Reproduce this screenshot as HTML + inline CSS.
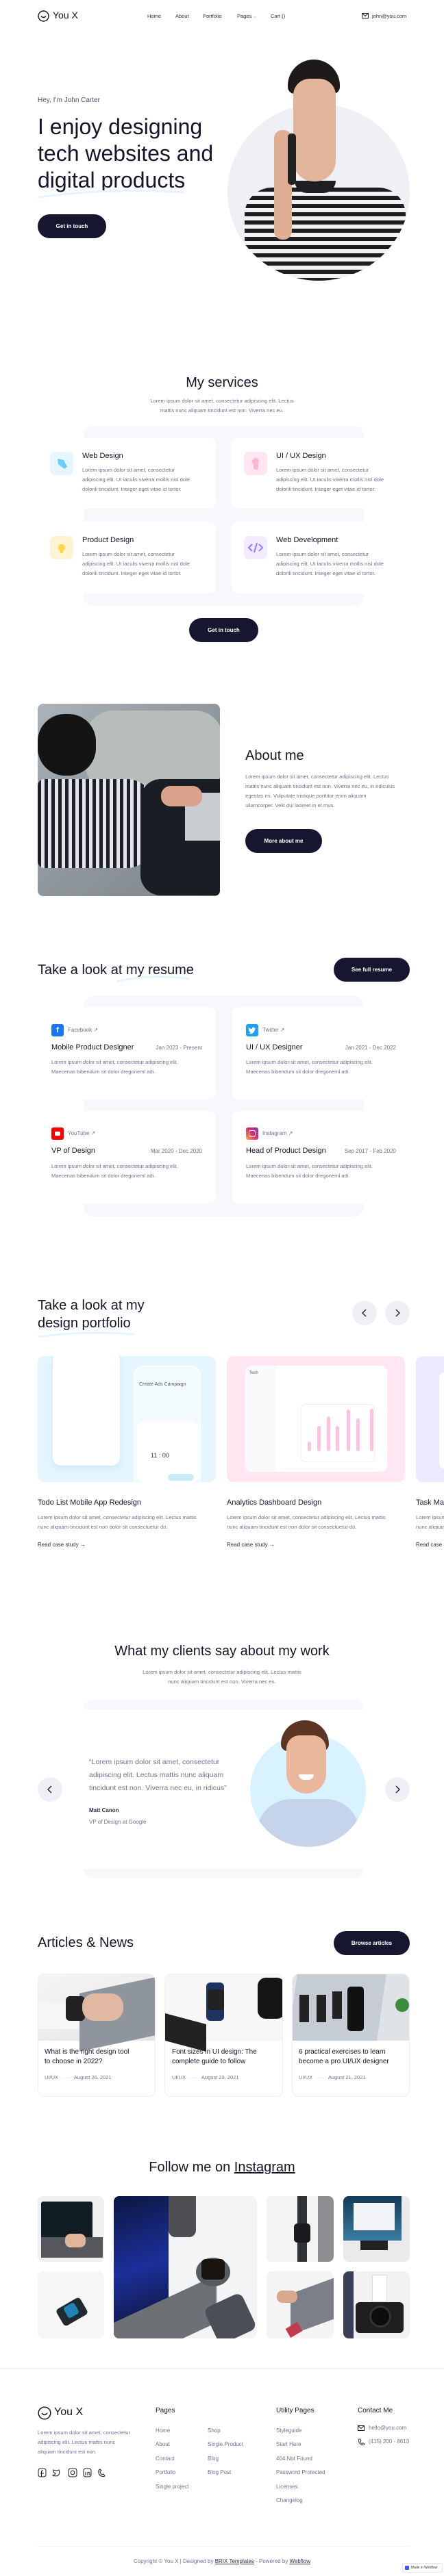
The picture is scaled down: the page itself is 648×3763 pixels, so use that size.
<!DOCTYPE html>
<html><head><meta charset="utf-8">
<style>
*{margin:0;padding:0;box-sizing:border-box}
html,body{width:648px;height:3763px;overflow:hidden;background:#fff}
body{position:relative;font-family:"Liberation Sans",sans-serif;color:#14142b}
.a{position:absolute}
.t{position:absolute;white-space:nowrap}
.g{color:#6e7191}
.btn{position:absolute;background:#161630;color:#fff;border-radius:20px;font-size:8px;font-weight:bold;display:flex;align-items:center;justify-content:center}
.h2{font-size:20px;font-weight:500}
.p{font-size:7.6px;line-height:14px;color:#6e7191}
.panel{position:absolute;background:#f7f7fc;border-radius:14px}
.card{position:absolute;background:#fff;border-radius:10px}
.circ{position:absolute;border-radius:50%;background:#eff0f6;display:flex;align-items:center;justify-content:center}
.nav{font-size:7.5px;color:#2e2e48}
.ico{position:absolute;width:34px;height:34px;border-radius:7px}
.lg{position:absolute;width:18px;height:18px;border-radius:3px;color:#fff;font-size:11px;font-weight:bold;display:flex;align-items:center;justify-content:center}
.img{position:absolute;overflow:hidden;border-radius:8px}
</style></head><body>

<!-- NAV -->
<svg class="a" style="left:55px;top:15px" width="17" height="17" viewBox="0 0 17 17"><circle cx="8.5" cy="8.5" r="7.5" fill="none" stroke="#14142b" stroke-width="1.4"/><path d="M5 8.5 Q8.5 12.5 12 8.5" fill="none" stroke="#14142b" stroke-width="1.4"/></svg>
<div class="t" style="left:77px;top:14px;font-size:14px">You X</div>
<div class="t nav" style="left:215px;top:19px">Home</div>
<div class="t nav" style="left:256px;top:19px">About</div>
<div class="t nav" style="left:296px;top:19px">Portfolio</div>
<div class="t nav" style="left:346px;top:19px">Pages <span style="color:#aaa">⌄</span></div>
<div class="t nav" style="left:395px;top:19px">Cart ()</div>
<svg class="a" style="left:528px;top:19px" width="10" height="8" viewBox="0 0 10 8"><rect x=".5" y=".5" width="9" height="7" fill="none" stroke="#14142b"/><path d="M.5 .5 L5 4.5 L9.5 .5" fill="none" stroke="#14142b"/></svg>
<div class="t nav" style="left:543px;top:19px">john@you.com</div>

<!-- HERO -->
<div class="t g" style="left:55px;top:141px;font-size:10px;color:#4e4b66">Hey, I’m John Carter</div>
<div class="a" style="left:55px;top:166px;font-size:32px;line-height:39px;font-weight:500;white-space:nowrap">I enjoy designing<br>tech websites and<br>digital products</div>
<svg class="a" style="left:55px;top:276px" width="220" height="14"><path d="M1 12 Q100 -2 214 5" fill="none" stroke="#e5f4ff" stroke-width="3"/></svg>
<div class="btn" style="left:55px;top:313px;width:100px;height:35px">Get in touch</div>
<div class="a" style="left:332px;top:152px;width:266px;height:258px;border-radius:50%;background:#eff0f6;overflow:hidden">
  <div class="a" style="left:25px;top:122px;width:235px;height:160px;border-radius:40px 40px 0 0;background:repeating-linear-gradient(180deg,#1d1d22 0 6px,#f2f2f2 6px 12px)"></div>
  <div class="a" style="left:98px;top:112px;width:60px;height:18px;border-radius:0 0 30px 30px;background:#1d1d22"></div>
</div>
<div class="a" style="left:420px;top:87px;width:76px;height:50px;border-radius:38px 38px 10px 10px;background:#1e1a1a"></div>
<div class="a" style="left:428px;top:115px;width:62px;height:150px;border-radius:24px 24px 30px 30px;background:#e2b49a"></div>
<div class="a" style="left:400px;top:190px;width:26px;height:160px;border-radius:12px;background:#dfae93"></div>
<div class="a" style="left:420px;top:195px;width:12px;height:75px;border-radius:5px;background:#222"></div>

<!-- SERVICES -->
<div class="t h2" style="left:0;width:648px;text-align:center;top:548px">My services</div>
<div class="a p" style="left:0;width:648px;text-align:center;top:579px">Lorem ipsum dolor sit amet, consectetur adipiscing elit. Lectus<br>mattis nunc aliquam tincidunt est non. Viverra nec eu.</div>
<div class="panel" style="left:122px;top:622px;width:409px;height:263px"></div>
<div class="card" style="left:40px;top:640px;width:275px;height:103px"></div>
<div class="card" style="left:338px;top:640px;width:270px;height:103px"></div>
<div class="card" style="left:40px;top:762px;width:275px;height:105px"></div>
<div class="card" style="left:338px;top:762px;width:270px;height:105px"></div>
<div class="ico" style="left:73px;top:660px;background:#e5f6ff"><svg width="34" height="34"><path d="M11 10 L20 12 L25 22 L21 25 L12 18 Z" fill="#6ccdfa"/></svg></div>
<div class="ico" style="left:356px;top:660px;background:#ffe6f1"><svg width="34" height="34"><circle cx="17" cy="14" r="5" fill="#ffb6d5"/><rect x="14" y="14" width="7" height="12" rx="3" fill="#ffb6d5"/></svg></div>
<div class="ico" style="left:73px;top:783px;background:#fff3d4"><svg width="34" height="34"><circle cx="17" cy="17" r="5" fill="#ffd63e"/><rect x="15" y="21" width="4" height="4" fill="#ffd63e"/></svg></div>
<div class="ico" style="left:356px;top:783px;background:#f1edff"><svg width="34" height="34"><path d="M12 12 L7 17 L12 22 M22 12 L27 17 L22 22 M19 10 L15 24" fill="none" stroke="#a17cff" stroke-width="2.2"/></svg></div>
<div class="t" style="left:120px;top:660px;font-size:11px">Web Design</div>
<div class="t" style="left:403px;top:660px;font-size:11px">UI / UX Design</div>
<div class="t" style="left:120px;top:783px;font-size:11px">Product Design</div>
<div class="t" style="left:403px;top:783px;font-size:11px">Web Development</div>
<div class="a p" style="left:120px;top:680px;white-space:nowrap">Lorem ipsum dolor sit amet, consectetur<br>adipiscing elit. Ut iaculis viverra mollis nisl dole<br>dolorili tincidunt. Integer eget vitae id tortor.</div>
<div class="a p" style="left:403px;top:680px;white-space:nowrap">Lorem ipsum dolor sit amet, consectetur<br>adipiscing elit. Ut iaculis viverra mollis nisl dole<br>dolorili tincidunt. Integer eget vitae id tortor.</div>
<div class="a p" style="left:120px;top:803px;white-space:nowrap">Lorem ipsum dolor sit amet, consectetur<br>adipiscing elit. Ut iaculis viverra mollis nisl dole<br>dolorili tincidunt. Integer eget vitae id tortor.</div>
<div class="a p" style="left:403px;top:803px;white-space:nowrap">Lorem ipsum dolor sit amet, consectetur<br>adipiscing elit. Ut iaculis viverra mollis nisl dole<br>dolorili tincidunt. Integer eget vitae id tortor.</div>
<div class="btn" style="left:276px;top:903px;width:101px;height:35px">Get in touch</div>

<!-- ABOUT -->
<div class="img" style="left:55px;top:1028px;width:266px;height:281px;background:linear-gradient(135deg,#aab2ba,#8f989e 50%,#7d8589)">
  <div class="a" style="left:70px;top:10px;width:200px;height:120px;border-radius:40px;background:#b7bdb8"></div>
  <div class="a" style="left:0;top:110px;width:170px;height:130px;background:repeating-linear-gradient(90deg,#1c1f2a 0 5px,#e5e5ea 5px 10px);border-radius:10px 40px 40px 10px"></div>
  <div class="a" style="left:0;top:15px;width:85px;height:90px;border-radius:40px;background:#141414"></div>
  <div class="a" style="left:150px;top:110px;width:116px;height:170px;background:#1a1d23;border-radius:30px 0 0 30px"></div>
  <div class="a" style="left:215px;top:130px;width:51px;height:70px;background:#c9ccd0"></div>
  <div class="a" style="left:180px;top:120px;width:60px;height:30px;border-radius:14px;background:#d9a38b"></div>
</div>
<div class="t h2" style="left:358px;top:1093px">About me</div>
<div class="a p" style="left:358px;top:1128px;white-space:nowrap">Lorem ipsum dolor sit amet, consectetur adipiscing elit. Lectus<br>mattis nunc aliquam tincidunt est non. Viverra nec eu, in ridiculus<br>egestas mi. Vulputate tristique porttitor enim aliquam<br>ullamcorper. Velit dui laoreet in et mus.</div>
<div class="btn" style="left:358px;top:1211px;width:112px;height:35px">More about me</div>

<!-- RESUME -->
<div class="t h2" style="left:55px;top:1406px">Take a look at my resume</div>
<svg class="a" style="left:168px;top:1424px" width="112" height="12"><path d="M2 10 Q50 -2 108 6" fill="none" stroke="#e5f4ff" stroke-width="3"/></svg>
<div class="btn" style="left:487px;top:1399px;width:111px;height:35px">See full resume</div>
<div class="panel" style="left:122px;top:1455px;width:409px;height:322px"></div>
<div class="card" style="left:40px;top:1471px;width:275px;height:135px"></div>
<div class="card" style="left:339px;top:1471px;width:269px;height:135px"></div>
<div class="card" style="left:40px;top:1623px;width:275px;height:135px"></div>
<div class="card" style="left:339px;top:1623px;width:269px;height:135px"></div>
<div class="lg" style="left:75px;top:1496px;background:#1877f2">f</div>
<div class="lg" style="left:359px;top:1496px;background:#1da1f2"><svg width="12" height="10" viewBox="0 0 12 10"><path d="M11 1.5 Q10 2 9.5 2 Q9 .5 7.5 .5 Q5.5 .8 5.8 3.2 Q3 3 1 1 Q.2 3.5 2 4.8 Q1.5 4.8 1 4.6 Q1.3 6.5 3 7 Q2.3 7.2 1.8 7 Q2.5 8.5 4.5 8.6 Q2.8 9.8 .5 9.5 Q6 12 9.5 6 Q10.3 4.5 10.3 2.6 Q11 2 11 1.5Z" fill="#fff"/></svg></div>
<div class="lg" style="left:75px;top:1647px;background:#ff0000"><div style="width:8px;height:6px;background:#fff;border-radius:1px"></div></div>
<div class="lg" style="left:359px;top:1647px;background:linear-gradient(45deg,#fcaf45,#e1306c,#833ab4)"><div style="width:10px;height:10px;border:1.5px solid #fff;border-radius:3px"></div></div>
<div class="t g" style="left:99px;top:1500px;font-size:8px">Facebook ↗</div>
<div class="t g" style="left:383px;top:1500px;font-size:8px">Twitter ↗</div>
<div class="t g" style="left:99px;top:1651px;font-size:8px">YouTube ↗</div>
<div class="t g" style="left:383px;top:1651px;font-size:8px">Instagram ↗</div>
<div class="t" style="left:75px;top:1524px;font-size:11px">Mobile Product Designer</div>
<div class="t g" style="left:224px;top:1526px;font-size:8px;width:71px;text-align:right">Jan 2023 - Present</div>
<div class="t" style="left:359px;top:1524px;font-size:11px">UI / UX Designer</div>
<div class="t g" style="left:490px;top:1526px;font-size:8px;width:88px;text-align:right">Jan 2021 - Dec 2022</div>
<div class="t" style="left:75px;top:1675px;font-size:11px">VP of Design</div>
<div class="t g" style="left:200px;top:1677px;font-size:8px;width:95px;text-align:right">Mar 2020 - Dec 2020</div>
<div class="t" style="left:359px;top:1675px;font-size:11px">Head of Product Design</div>
<div class="t g" style="left:480px;top:1677px;font-size:8px;width:98px;text-align:right">Sep 2017 - Feb 2020</div>
<div class="a p" style="left:75px;top:1545px;white-space:nowrap">Lorem ipsum dolor sit amet, consectetur adipiscing elit.<br>Maecenas bibendum sit dolor dregoneml adi.</div>
<div class="a p" style="left:359px;top:1545px;white-space:nowrap">Lorem ipsum dolor sit amet, consectetur adipiscing elit.<br>Maecenas bibendum sit dolor dregoneml adi.</div>
<div class="a p" style="left:75px;top:1697px;white-space:nowrap">Lorem ipsum dolor sit amet, consectetur adipiscing elit.<br>Maecenas bibendum sit dolor dregoneml adi.</div>
<div class="a p" style="left:359px;top:1697px;white-space:nowrap">Lorem ipsum dolor sit amet, consectetur adipiscing elit.<br>Maecenas bibendum sit dolor dregoneml adi.</div>

<!-- PORTFOLIO -->
<div class="a h2" style="left:55px;top:1894px;line-height:26px;white-space:nowrap">Take a look at my<br>design portfolio</div>
<svg class="a" style="left:55px;top:1943px" width="142" height="12"><path d="M1 10 Q70 0 140 6" fill="none" stroke="#e5f4ff" stroke-width="3"/></svg>
<div class="circ" style="left:514px;top:1900px;width:36px;height:36px"><svg width="10" height="12"><path d="M7 1 L2 6 L7 11" fill="none" stroke="#14142b" stroke-width="1.3"/></svg></div>
<div class="circ" style="left:562px;top:1900px;width:36px;height:36px"><svg width="10" height="12"><path d="M3 1 L8 6 L3 11" fill="none" stroke="#14142b" stroke-width="1.3"/></svg></div>
<div class="img" style="left:55px;top:1981px;width:260px;height:184px;background:#e5f6ff;border-radius:10px">
  <div class="a" style="left:22px;top:-5px;width:98px;height:165px;background:#fff;border-radius:12px;box-shadow:0 4px 10px rgba(150,200,230,.3)"></div>
  <div class="a" style="left:140px;top:14px;width:98px;height:180px;background:#f4fbff;border-radius:14px;border:1px solid #fff"></div>
  <div class="a" style="left:145px;top:95px;width:90px;height:90px;background:#fff;border-radius:12px"></div>
  <div class="t" style="left:148px;top:38px;font-size:7px;color:#555">Create Ads Campaign</div>
  <div class="t" style="left:165px;top:140px;font-size:9px;color:#333">11 : 00</div>
  <div class="a" style="left:190px;top:172px;width:38px;height:10px;border-radius:5px;background:#c8ecfd"></div>
</div>
<div class="img" style="left:331px;top:1981px;width:260px;height:184px;background:#ffe6f1;border-radius:10px">
  <div class="a" style="left:27px;top:14px;width:207px;height:155px;background:#fff;border-radius:10px"></div>
  <div class="a" style="left:27px;top:14px;width:45px;height:155px;background:#fafafc;border-radius:10px 0 0 10px"></div>
  <div class="t" style="left:33px;top:22px;font-size:6px;color:#555">Tech</div>
  <div class="a" style="left:108px;top:70px;width:108px;height:85px;border:1px solid #f0f0f5;border-radius:6px"></div>
  <div class="a" style="left:118px;top:125px;width:5px;height:14px;background:#ffc1df;border-radius:3px"></div>
  <div class="a" style="left:132px;top:102px;width:5px;height:37px;background:#ffc1df;border-radius:3px"></div>
  <div class="a" style="left:146px;top:88px;width:5px;height:51px;background:#ffc1df;border-radius:3px"></div>
  <div class="a" style="left:159px;top:102px;width:5px;height:37px;background:#ffc1df;border-radius:3px"></div>
  <div class="a" style="left:175px;top:78px;width:5px;height:61px;background:#ffc1df;border-radius:3px"></div>
  <div class="a" style="left:189px;top:91px;width:5px;height:48px;background:#ffc1df;border-radius:3px"></div>
  <div class="a" style="left:209px;top:77px;width:5px;height:62px;background:#ffc1df;border-radius:3px"></div>
</div>
<div class="img" style="left:607px;top:1981px;width:41px;height:184px;background:#eee9ff;border-radius:10px 0 0 10px"><div class="a" style="left:34px;top:24px;width:7px;height:140px;background:#fff;border-radius:10px 0 0 10px"></div></div>
<div class="t" style="left:55px;top:2189px;font-size:11px">Todo List Mobile App Redesign</div>
<div class="t" style="left:331px;top:2189px;font-size:11px">Analytics Dashboard Design</div>
<div class="a" style="left:607px;top:2189px;font-size:11px;width:41px;overflow:hidden;white-space:nowrap">Task Man</div>
<div class="a p" style="left:55px;top:2210px;white-space:nowrap">Lorem ipsum dolor sit amet, consectetur adipiscing elit. Lectus mattis<br>nunc aliquam tincidunt est non dolor sit consectuetur do.</div>
<div class="a p" style="left:331px;top:2210px;white-space:nowrap">Lorem ipsum dolor sit amet, consectetur adipiscing elit. Lectus mattis<br>nunc aliquam tincidunt est non dolor sit consectuetur do.</div>
<div class="a p" style="left:607px;top:2210px;width:41px;overflow:hidden;white-space:nowrap">Lorem ipsum<br>nunc aliquam</div>
<div class="t" style="left:55px;top:2252px;font-size:8px;color:#2e2e48">Read case study →</div>
<div class="t" style="left:331px;top:2252px;font-size:8px;color:#2e2e48">Read case study →</div>
<div class="a" style="left:607px;top:2252px;font-size:8px;color:#2e2e48;width:41px;overflow:hidden;white-space:nowrap">Read case st</div>

<!-- TESTIMONIALS -->
<div class="t h2" style="left:0;width:648px;text-align:center;top:2401px">What my clients say about my work</div>
<div class="a p" style="left:0;width:648px;text-align:center;top:2436px">Lorem ipsum dolor sit amet, consectetur adipiscing elit. Lectus mattis<br>nunc aliquam tincidunt est non. Viverra nec eu.</div>
<div class="panel" style="left:122px;top:2483px;width:409px;height:261px"></div>
<div class="card" style="left:40px;top:2497px;width:568px;height:233px;border-radius:0"></div>
<div class="a" style="left:130px;top:2565px;font-size:10.5px;line-height:19px;color:#6e7191;white-space:nowrap">“Lorem ipsum dolor sit amet, consectetur<br>adipiscing elit. Lectus mattis nunc aliquam<br>tincidunt est non. Viverra nec eu, in ridicus”</div>
<div class="t" style="left:130px;top:2640px;font-size:8px;font-weight:bold;color:#2e2e48">Matt Canon</div>
<div class="t g" style="left:130px;top:2657px;font-size:8px">VP of Design at Google</div>
<div class="a" style="left:365px;top:2533px;width:169px;height:165px;border-radius:50%;background:#d9f2ff;overflow:hidden">
  <div class="a" style="left:10px;top:95px;width:150px;height:90px;border-radius:50px 50px 0 0;background:#c5d4ea"></div>
</div>
<div class="a" style="left:410px;top:2513px;width:70px;height:45px;border-radius:35px 35px 10px 10px;background:#5b3524"></div>
<div class="a" style="left:418px;top:2535px;width:58px;height:85px;border-radius:20px 20px 30px 30px;background:#e9b89c"></div>
<div class="a" style="left:436px;top:2592px;width:22px;height:8px;border-radius:0 0 10px 10px;background:#fff"></div>
<div class="circ" style="left:55px;top:2596px;width:36px;height:36px"><svg width="10" height="12"><path d="M7 1 L2 6 L7 11" fill="none" stroke="#14142b" stroke-width="1.3"/></svg></div>
<div class="circ" style="left:562px;top:2596px;width:36px;height:36px"><svg width="10" height="12"><path d="M3 1 L8 6 L3 11" fill="none" stroke="#14142b" stroke-width="1.3"/></svg></div>

<!-- ARTICLES -->
<div class="t h2" style="left:55px;top:2827px">Articles &amp; News</div>
<div class="btn" style="left:487px;top:2821px;width:111px;height:35px">Browse articles</div>
<div class="card" style="left:55px;top:2883px;width:172px;height:180px;border:1px solid #eff0f6;overflow:hidden">
  <div class="a" style="left:0;top:0;width:172px;height:97px;background:linear-gradient(160deg,#f5f5f5,#e4e5e8)"><div class="a" style="left:60px;top:15px;width:120px;height:85px;background:#8f959c;transform:skewY(-12deg)"></div><div class="a" style="left:0;top:40px;width:60px;height:40px;background:#f6f6f6"></div><div class="a" style="left:40px;top:32px;width:28px;height:36px;border-radius:6px;background:#222"></div><div class="a" style="left:64px;top:28px;width:60px;height:40px;border-radius:18px;background:#e1b9a3"></div></div>
</div>
<div class="card" style="left:240px;top:2883px;width:173px;height:180px;border:1px solid #eff0f6;overflow:hidden">
  <div class="a" style="left:0;top:0;width:173px;height:97px;background:#f7f7f8"><div class="a" style="left:60px;top:12px;width:26px;height:56px;background:#1f3360;border-radius:6px"></div><div class="a" style="left:62px;top:22px;width:24px;height:30px;background:#222;border-radius:5px"></div><div class="a" style="left:135px;top:5px;width:40px;height:60px;background:#151515;border-radius:12px"></div><div class="a" style="left:0;top:65px;width:60px;height:40px;background:#222;transform:skewY(15deg)"></div></div>
</div>
<div class="card" style="left:426px;top:2883px;width:172px;height:180px;border:1px solid #eff0f6;overflow:hidden">
  <div class="a" style="left:0;top:0;width:172px;height:97px;background:#dfe3e8"><div class="a" style="left:0;top:0;width:130px;height:97px;background:#c6ccd4;transform:skewX(-8deg)"></div><div class="a" style="left:10px;top:30px;width:14px;height:40px;background:#222"></div><div class="a" style="left:35px;top:30px;width:14px;height:40px;background:#222"></div><div class="a" style="left:58px;top:25px;width:14px;height:40px;background:#222"></div><div class="a" style="left:80px;top:18px;width:24px;height:65px;background:#111;border-radius:5px"></div><div class="a" style="left:150px;top:35px;width:20px;height:20px;background:#3d8b3d;border-radius:50%"></div></div>
</div>
<div class="a" style="left:65px;top:2991px;font-size:10px;line-height:14px;white-space:nowrap">What is the right design tool<br>to choose in 2022?</div>
<div class="a" style="left:251px;top:2991px;font-size:10px;line-height:14px;white-space:nowrap">Font sizes in UI design: The<br>complete guide to follow</div>
<div class="a" style="left:436px;top:2991px;font-size:10px;line-height:14px;white-space:nowrap">6 practical exercises to learn<br>become a pro UI/UX designer</div>
<div class="t g" style="left:65px;top:3030px;font-size:7.5px">UI/UX &nbsp;<span style="color:#e5e5ee">——</span>&nbsp; August 26, 2021</div>
<div class="t g" style="left:251px;top:3030px;font-size:7.5px">UI/UX &nbsp;<span style="color:#e5e5ee">——</span>&nbsp; August 23, 2021</div>
<div class="t g" style="left:436px;top:3030px;font-size:7.5px">UI/UX &nbsp;<span style="color:#e5e5ee">——</span>&nbsp; August 21, 2021</div>

<!-- INSTAGRAM -->
<div class="t h2" style="left:0;width:648px;text-align:center;top:3155px">Follow me on <span style="text-decoration:underline">Instagram</span></div>
<div class="img" style="left:55px;top:3208px;width:97px;height:96px;background:#eef0f2"><div class="a" style="left:5px;top:8px;width:75px;height:55px;background:#0f1c24;border-radius:3px"></div><div class="a" style="left:5px;top:60px;width:90px;height:30px;background:#55575c"></div><div class="a" style="left:40px;top:55px;width:30px;height:20px;background:#e2b49a;border-radius:8px"></div></div>
<div class="img" style="left:55px;top:3318px;width:97px;height:98px;background:#f6f6f7"><div class="a" style="left:30px;top:45px;width:40px;height:28px;background:#1e2a30;transform:rotate(-30deg);border-radius:5px"></div><div class="a" style="left:40px;top:48px;width:18px;height:18px;background:#1f84b5;border-radius:4px;transform:rotate(-30deg)"></div></div>
<div class="img" style="left:166px;top:3208px;width:209px;height:208px;background:#f3f4f5"><div class="a" style="left:0;top:0;width:80px;height:208px;background:linear-gradient(160deg,#0b1640,#1d2f9a 50%,#0a0f2a)"></div><div class="a" style="left:0;top:150px;width:150px;height:70px;background:#6d7075;transform:skewY(-25deg)"></div><div class="a" style="left:120px;top:90px;width:50px;height:42px;border-radius:50%;background:#595c5e"></div><div class="a" style="left:128px;top:92px;width:34px;height:30px;border-radius:6px;background:#1a1410"></div><div class="a" style="left:140px;top:150px;width:60px;height:58px;background:#4b4e55;border-radius:10px;transform:rotate(-25deg)"></div><div class="a" style="left:80px;top:0;width:40px;height:60px;background:#4d4f52;border-radius:0 0 10px 10px"></div></div>
<div class="img" style="left:389px;top:3208px;width:98px;height:96px;background:#f3f3f4"><div class="a" style="left:45px;top:0;width:14px;height:96px;background:#2e3236"></div><div class="a" style="left:40px;top:40px;width:24px;height:28px;background:#1b1b1f;border-radius:5px"></div><div class="a" style="left:75px;top:0;width:23px;height:96px;background:#8d8f93"></div></div>
<div class="img" style="left:389px;top:3318px;width:98px;height:98px;background:#f4f4f5"><div class="a" style="left:35px;top:20px;width:70px;height:60px;background:#7a7f88;transform:skewY(-20deg)"></div><div class="a" style="left:15px;top:28px;width:30px;height:18px;background:#d9a88e;border-radius:8px"></div><div class="a" style="left:30px;top:78px;width:20px;height:15px;background:#c23a4b;transform:rotate(-30deg)"></div></div>
<div class="img" style="left:501px;top:3208px;width:97px;height:96px;background:#e8eaec"><div class="a" style="left:0;top:0;width:85px;height:65px;background:linear-gradient(#123a56,#3a7da3)"></div><div class="a" style="left:15px;top:10px;width:60px;height:40px;background:#f3f5f8"></div><div class="a" style="left:25px;top:65px;width:40px;height:14px;background:#222"></div></div>
<div class="img" style="left:501px;top:3318px;width:97px;height:98px;background:#f2f2f3"><div class="a" style="left:0;top:0;width:15px;height:98px;background:#3a3f58"></div><div class="a" style="left:42px;top:5px;width:22px;height:40px;background:#fff;border:1px solid #ddd"></div><div class="a" style="left:18px;top:45px;width:70px;height:45px;background:#1e1e20;border-radius:6px"></div><div class="a" style="left:38px;top:50px;width:32px;height:32px;background:#0d0d0d;border-radius:50%;border:3px solid #333"></div></div>

<!-- FOOTER -->
<div class="a" style="left:0;top:3459px;width:648px;height:2px;background:#f4f4f7"></div>
<svg class="a" style="left:55px;top:3515px" width="20" height="20" viewBox="0 0 20 20"><circle cx="10" cy="10" r="8.8" fill="none" stroke="#14142b" stroke-width="1.5"/><path d="M6 10 Q10 15 14 10" fill="none" stroke="#14142b" stroke-width="1.5"/></svg>
<div class="t" style="left:79px;top:3515px;font-size:16px">You X</div>
<div class="a p" style="left:55px;top:3547px;white-space:nowrap">Lorem ipsum dolor sit amet, consectetur<br>adipiscing elit. Lectus mattis nunc<br>aliquam tincidunt est non.</div>
<svg class="a" style="left:55px;top:3605px" width="110" height="14" fill="none" stroke="#14142b" stroke-width="1"><rect x="1" y="1" width="11" height="12" rx="3"/><path d="M8 4 H7 Q5.5 4 5.5 6 V13 M4 8 H9"/><path d="M23 3 Q27 5 31 3 Q33 8 30 11 Q26 13 22 11 Q26 10 26 8 Q22 7 23 3Z"/><rect x="45" y="1" width="12" height="12" rx="3"/><circle cx="51" cy="7" r="2.8"/><rect x="67" y="1" width="11" height="12" rx="3"/><path d="M70 6 V11 M73 6 V11 M73 8 Q75 5 76 8 V11"/><path d="M91 2 Q87 4 90 10 Q94 14 98 12 L96 9 L94 10 Q91 8 91 5 L93 4 Z"/></svg>
<div class="t" style="left:227px;top:3516px;font-size:10px">Pages</div>
<div class="t" style="left:403px;top:3516px;font-size:10px">Utility Pages</div>
<div class="t" style="left:522px;top:3516px;font-size:10px">Contact Me</div>
<div class="a g" style="left:227px;top:3541px;font-size:8px;line-height:20.4px">Home<br>About<br>Contact<br>Portfolio<br>Single project</div>
<div class="a g" style="left:303px;top:3541px;font-size:8px;line-height:20.4px">Shop<br>Single Product<br>Blog<br>Blog Post</div>
<div class="a g" style="left:403px;top:3541px;font-size:8px;line-height:20.4px;white-space:nowrap">Styleguide<br>Start Here<br>404 Not Found<br>Password Protected<br>Licenses<br>Changelog</div>
<svg class="a" style="left:522px;top:3543px" width="10" height="8" viewBox="0 0 10 8"><rect x=".5" y=".5" width="9" height="7" fill="none" stroke="#14142b"/><path d="M.5 .5 L5 4.5 L9.5 .5" fill="none" stroke="#14142b"/></svg>
<div class="t g" style="left:538px;top:3542px;font-size:8px">hello@you.com</div>
<svg class="a" style="left:522px;top:3562px" width="10" height="11" viewBox="0 0 10 11"><path d="M2 1 L4 1 L5 3.5 L3.5 4.5 Q4.5 7 6.5 8 L7.5 6.5 L9.5 7.5 V9.5 Q5 10.5 2 6 Q0.5 3 2 1Z" fill="none" stroke="#14142b" stroke-width=".8"/></svg>
<div class="t g" style="left:538px;top:3562px;font-size:8px">(415) 200 - 8613</div>
<div class="a" style="left:55px;top:3719px;width:543px;height:1px;background:#eff0f6"></div>
<div class="t g" style="left:0;width:648px;text-align:center;top:3737px;font-size:8px">Copyright © You X | Designed by <span style="color:#2e2e48;text-decoration:underline">BRIX Templates</span> - Powered by <span style="color:#2e2e48;text-decoration:underline">Webflow</span></div>
<div class="a" style="left:587px;top:3744px;width:59px;height:14px;background:#fff;border:1px solid #e5e5ea;border-radius:3px;font-size:5px;display:flex;align-items:center;gap:3px;padding-left:3px;color:#333;overflow:hidden;white-space:nowrap"><span style="width:6px;height:6px;background:#4353ff;display:inline-block;border-radius:1px"></span>Made in Webflow</div>

</body></html>
